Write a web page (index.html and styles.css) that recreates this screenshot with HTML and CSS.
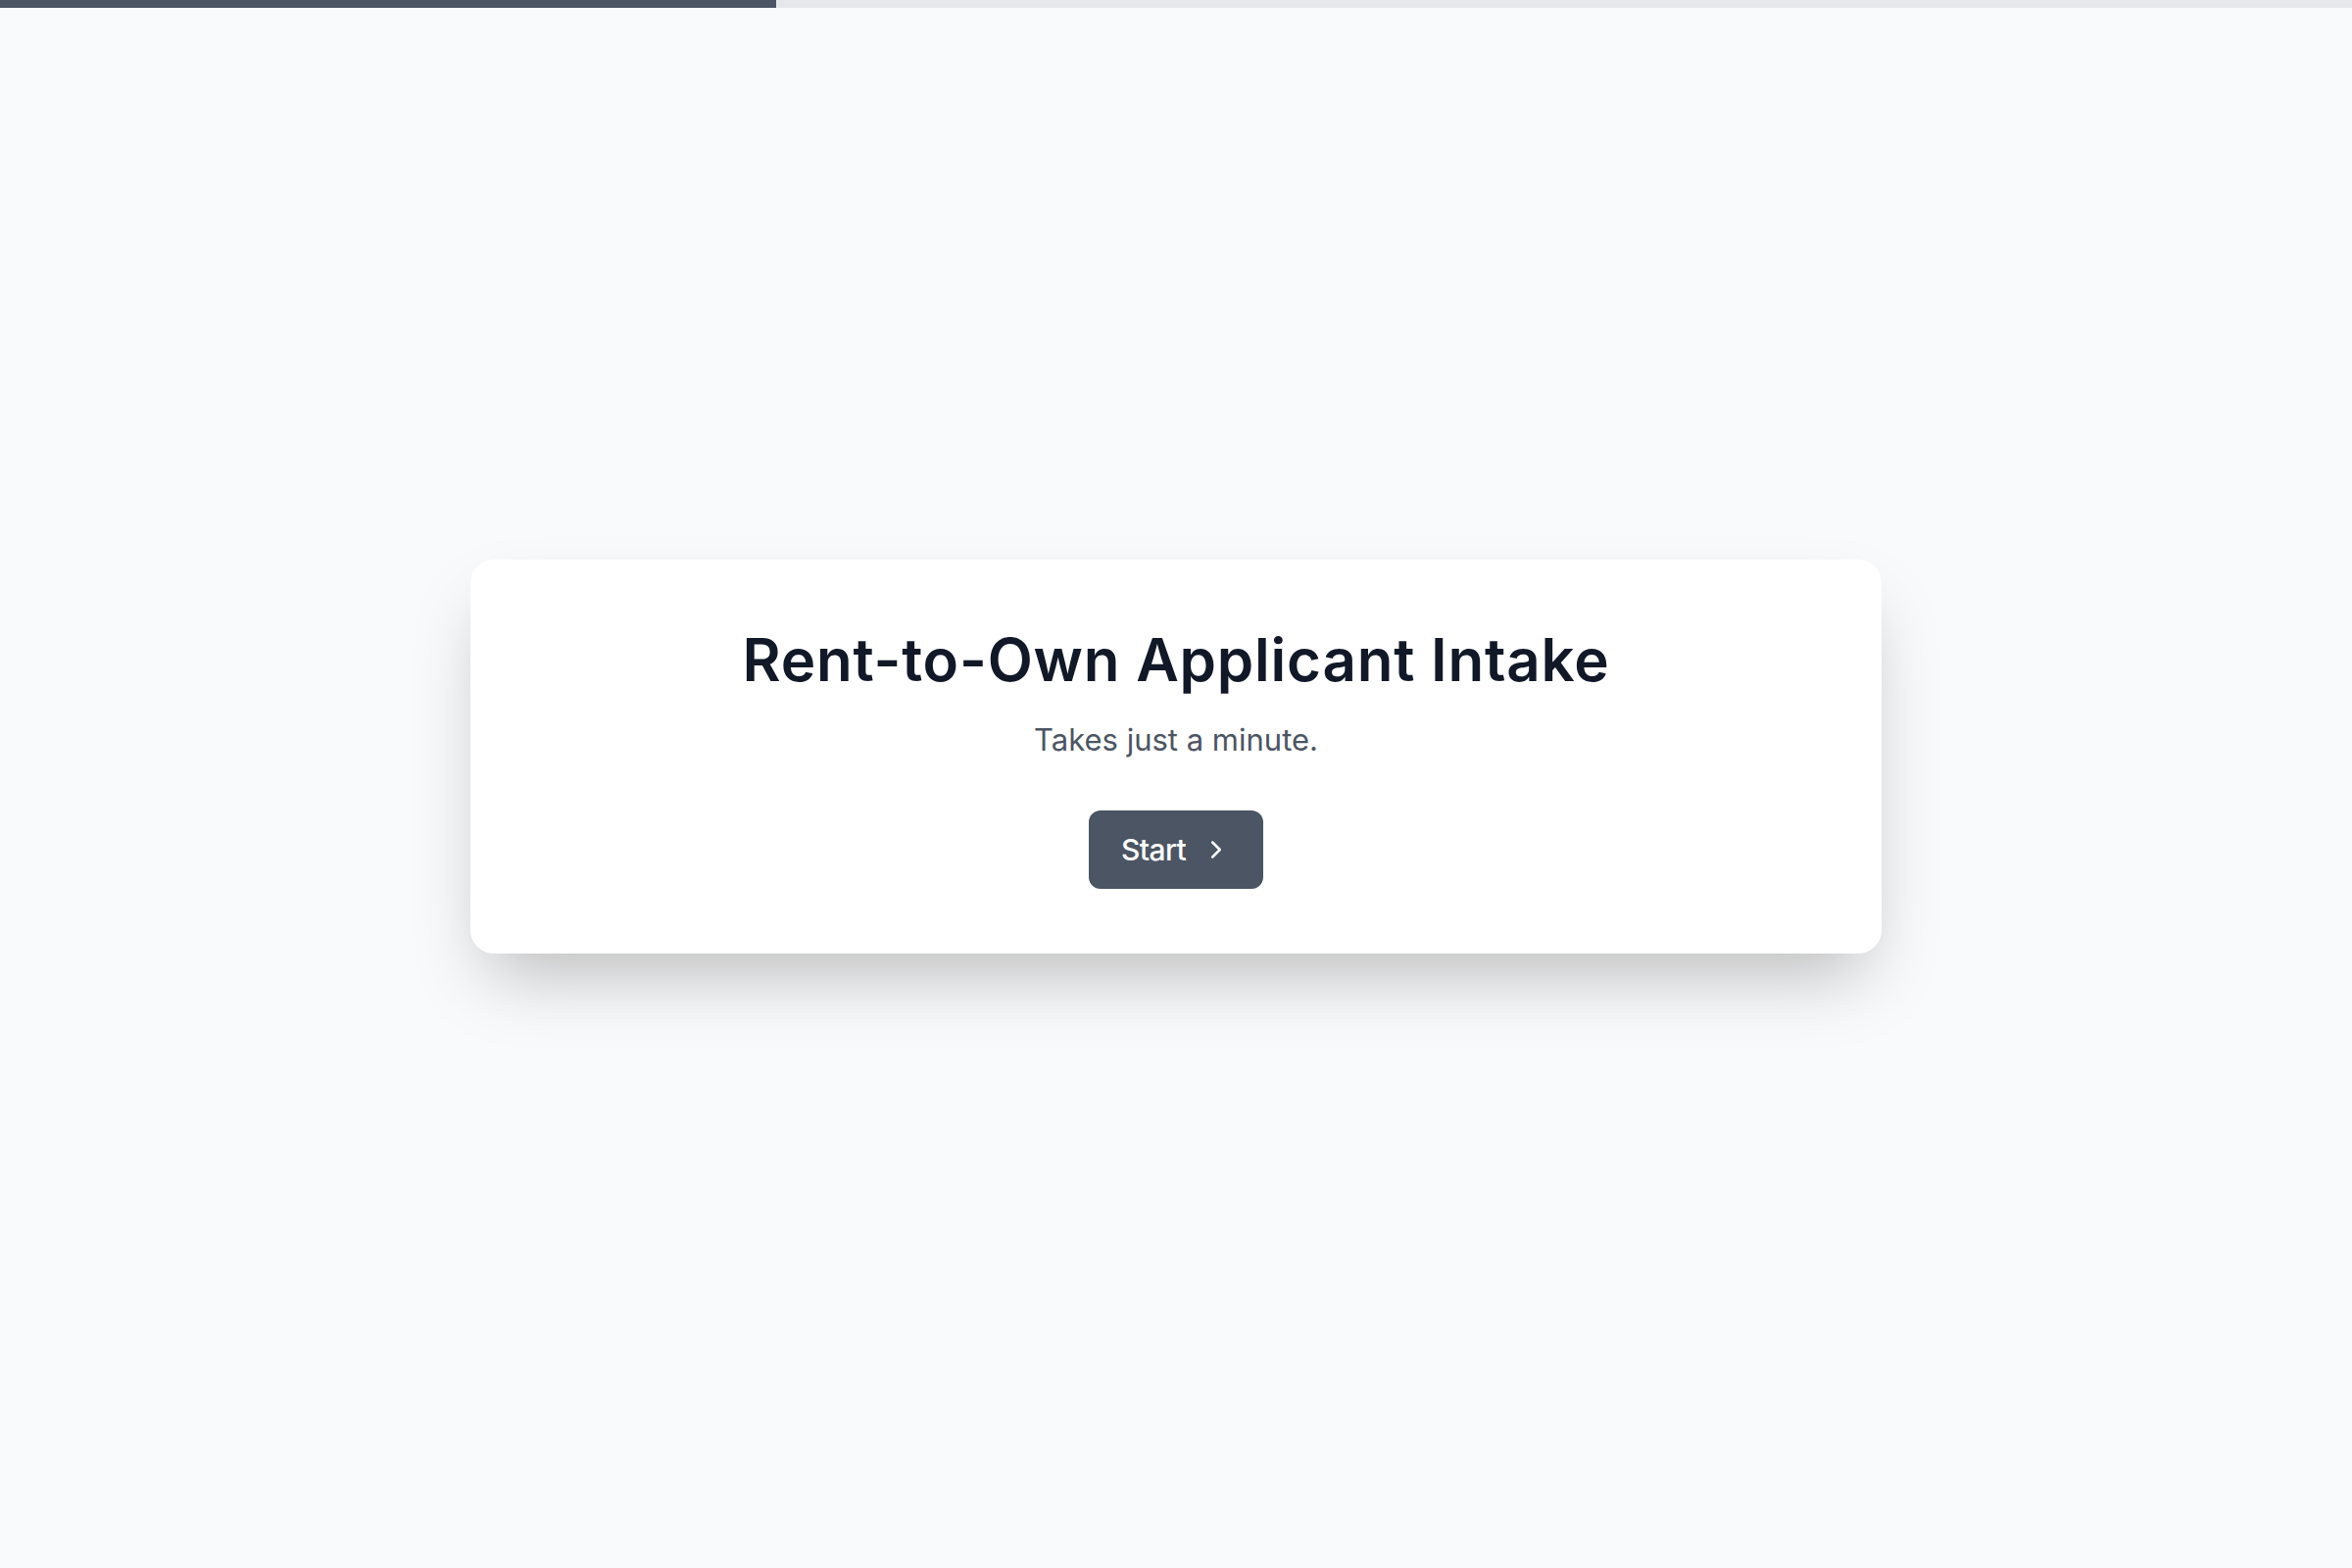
FILE: index.html
```html
<!DOCTYPE html>
<html lang="en">
<head>
    <meta charset="UTF-8">
    <meta name="viewport" content="width=device-width, initial-scale=1.0">
    <title>Rent-to-Own Applicant Intake</title>
    <link rel="stylesheet" href="styles.css">
</head>
<body>
    <div class="progress">
        <div class="progress-fill"></div>
    </div>

    <main class="page">
        <section class="card">
            <h1>Rent-to-Own Applicant Intake</h1>
            <p class="lead">Takes just a minute.</p>
            <button class="start-btn" type="button">
                Start
                <svg class="chevron" viewBox="0 0 24 24" width="30" height="30" fill="none" stroke="currentColor" stroke-width="2" stroke-linecap="round" stroke-linejoin="round">
                    <path d="m9 18 6-6-6-6"></path>
                </svg>
            </button>
        </section>
    </main>
</body>
</html>
```

FILE: styles.css
```css
body {
    font-family: Inter, "Noto Sans", sans-serif;
    background-color: #f9fafb;
    color: #111827;
    margin: 0;
    padding: 0;
}

.progress {
    height: 8px;
    background-color: #e5e7eb;
}

.progress-fill {
    width: 33%;
    height: 100%;
    background-color: #4b5563;
}

.page {
    min-height: calc(100vh - 8px);
    box-sizing: border-box;
    padding: 0 48px 64px;
    display: flex;
    align-items: center;
    justify-content: center;
}

.card {
    width: 100%;
    max-width: 1440px;
    box-sizing: border-box;
    padding: 66px 48px;
    background-color: #fff;
    border-radius: 24px;
    box-shadow: 0 37px 75px -18px rgba(0, 0, 0, 0.26);
    text-align: center;
}

.card h1 {
    margin: 0;
    font-size: 60px;
    line-height: 72px;
    font-weight: 600;
    letter-spacing: 0.8px;
    color: #111827;
}

.lead {
    margin: 23px 0 0;
    font-size: 31px;
    line-height: 45px;
    color: #4b5563;
}

.start-btn {
    margin-top: 50px;
    display: inline-flex;
    align-items: center;
    gap: 16px;
    padding: 19px 33px;
    border: none;
    border-radius: 12px;
    background-color: #4b5563;
    color: #fff;
    font-family: inherit;
    font-size: 30px;
    line-height: 42px;
    font-weight: 500;
    letter-spacing: -0.6px;
    cursor: pointer;
}

.chevron {
    display: block;
}
```
